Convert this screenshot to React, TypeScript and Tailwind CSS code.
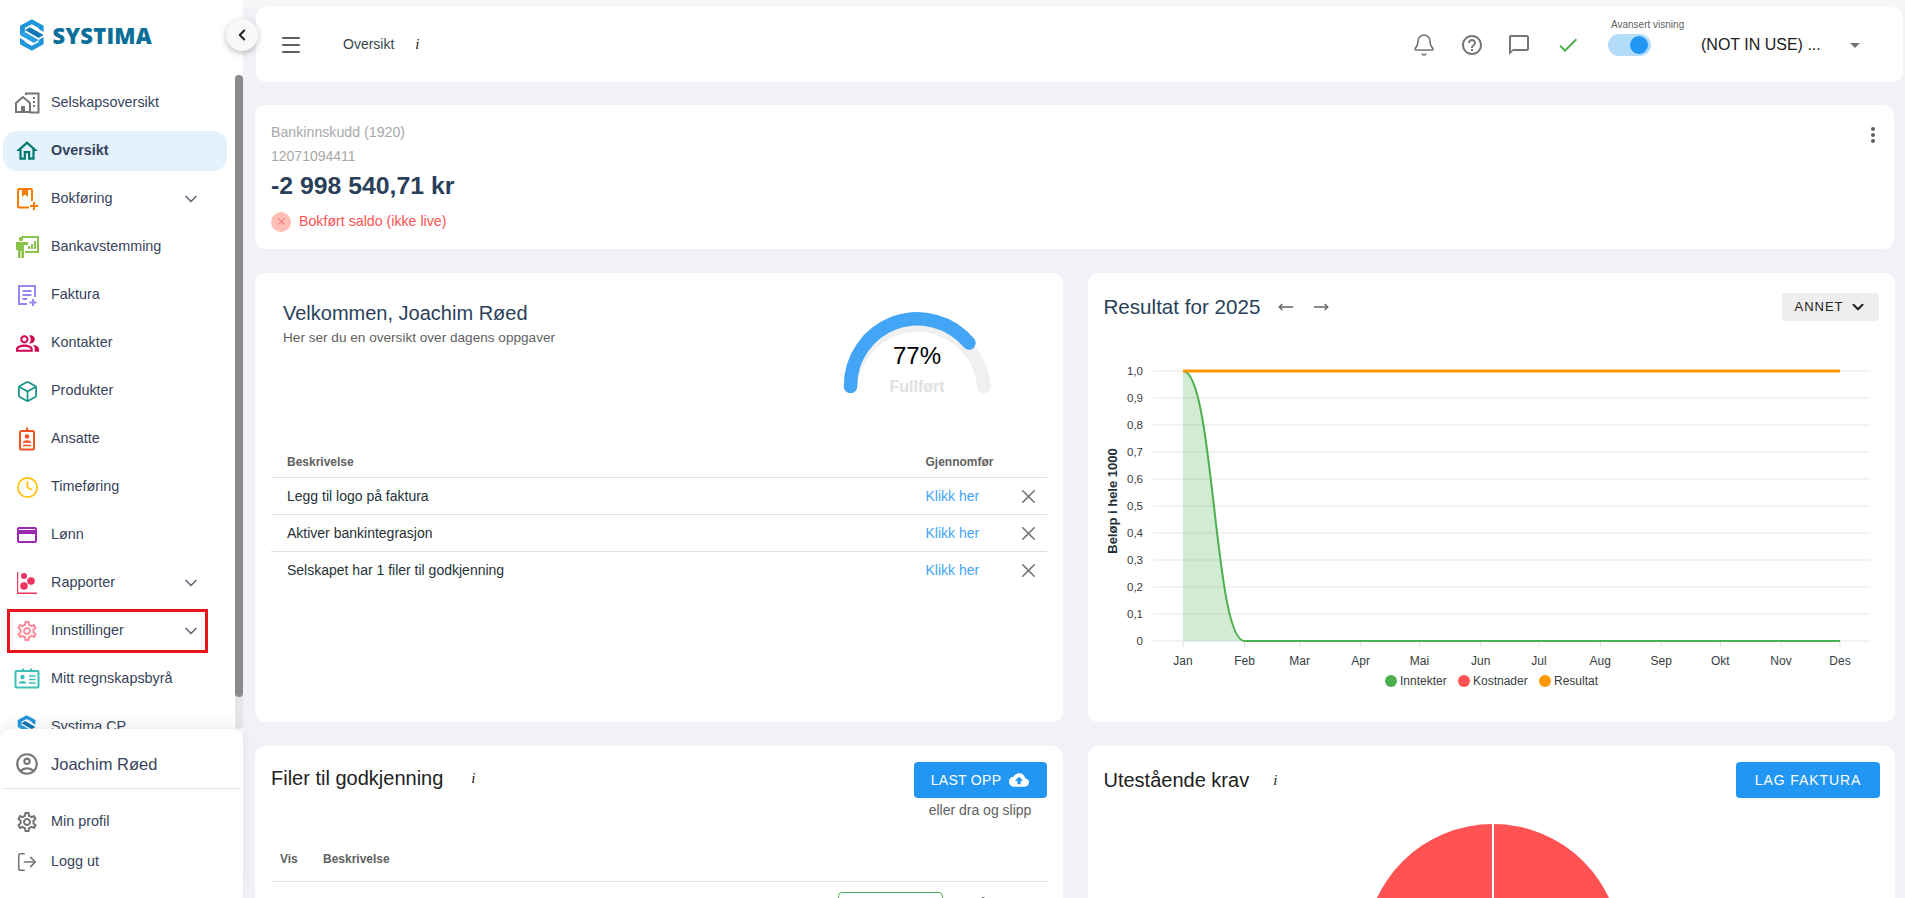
import React from 'react';
import { Bell, Box, ChevronDown, ChevronLeft, Clock, LogOut, Menu, MoveLeft, MoveRight, X } from 'lucide-react';
import {
  MdCheck,
  MdCloudUpload,
  MdMoreVert,
  MdOutlineAccountCircle,
  MdOutlineChatBubbleOutline,
  MdOutlineHelpOutline,
  MdOutlineHome,
  MdOutlinePeopleAlt,
  MdOutlineSettings,
  MdArrowDropDown,
} from 'react-icons/md';

const LogoMark = ({ size = 32 }: { size?: number }) => (
  <svg width={size * 0.8} height={size} viewBox="0 0 26 32">
    <path d="M13 0 L25 6.5 L25 13 L20 10 L20 9 L13 5 L6 9 L6 13 L1 16 L1 6.5 Z" fill="#1f96dc" />
    <path d="M6 11 L20 19 L25 16 L11 8 Z" fill="#1478b4" />
    <path d="M1 16 L15 24 L20 21 L6 13 Z" fill="#2a9fe2" />
    <path d="M1 19 L6 22 L6 23 L13 27 L20 23 L20 21 L25 18 L25 25.5 L13 32 L1 25.5 Z" fill="#1f96dc" />
  </svg>
);

const CompanyIcon = () => (
  <svg width="26" height="22" viewBox="0 0 26 22" fill="none" stroke="#757575" strokeWidth="2">
    <path d="M2 20 V11 L9 5 L16 11 V20 Z" />
    <rect x="7" y="14" width="4" height="6" fill="#757575" stroke="none" />
    <path d="M12 3 V1.5 H24.5 V20.5 H16" />
    <path d="M19 6h2M19 10h2M19 14h2" />
  </svg>
);

const BookIcon = () => (
  <svg width="24" height="24" viewBox="0 0 24 24" fill="none" stroke="#f57c00" strokeWidth="2">
    <path d="M14 20.5 H4 a1 1 0 0 1-1-1 V3 a1 1 0 0 1 1-1 H16 a1 1 0 0 1 1 1 V14" />
    <path d="M7 2 H13 V10 L10 7.5 L7 10 Z" fill="#f57c00" stroke="none" />
    <path d="M19 15 V23 M15 19 H23" />
  </svg>
);

const BankIcon = () => (
  <svg width="24" height="24" viewBox="0 0 24 24">
    <circle cx="6" cy="4" r="2.2" fill="#8bc34a" />
    <path d="M1 7 H13 V10 H9 V23 H6.5 V16 H5.5 V23 H3 V15 H1 Z" fill="#8bc34a" />
    <path d="M7 2 H23 V17 H10" fill="none" stroke="#8bc34a" strokeWidth="2" />
    <path d="M13 14 V11 H15 V14 Z M16 14 V9 H18 V14 Z M19 14 V6 H21 V14 Z" fill="#8bc34a" />
  </svg>
);

const InvoiceIcon = () => (
  <svg width="24" height="24" viewBox="0 0 24 24" fill="none" stroke="#9a86f2" strokeWidth="2">
    <path d="M12 21 H4 V3 H20 V14" />
    <path d="M7.5 8 H16.5 M7.5 12 H16.5 M7.5 16 H12" />
    <path d="M18 16 V23 M14.5 19.5 H21.5" />
  </svg>
);

const BadgeIcon = () => (
  <svg width="24" height="24" viewBox="0 0 24 24" fill="none" stroke="#f4511e" strokeWidth="2">
    <rect x="5" y="4" width="14" height="18.5" rx="1.5" />
    <path d="M12 0.5 V5" />
    <circle cx="12" cy="9.5" r="2.2" fill="#f4511e" stroke="none" />
    <path d="M8 15.5 C8 13 16 13 16 15.5 Z" fill="#f4511e" stroke="#f4511e" strokeWidth="0.6" />
    <path d="M8 18.5 H16" strokeWidth="1.5" />
  </svg>
);

const PayIcon = () => (
  <svg width="24" height="24" viewBox="0 0 24 24" fill="none">
    <rect x="3" y="5" width="18" height="14" rx="1" stroke="#9c27b0" strokeWidth="2" />
    <rect x="3" y="7" width="18" height="4" fill="#9c27b0" />
  </svg>
);

const ReportIcon = () => (
  <svg width="24" height="24" viewBox="0 0 24 24" fill="#f0335f">
    <path d="M2 1 H3.2 V21.5 H22 V23 H2 Z" />
    <circle cx="9" cy="5" r="3" />
    <circle cx="16" cy="10" r="3.8" />
    <circle cx="9" cy="15" r="3.8" />
  </svg>
);

const AgencyIcon = () => (
  <svg width="26" height="24" viewBox="0 0 26 24" fill="none" stroke="#3cc0b4" strokeWidth="2">
    <rect x="1.5" y="4" width="23" height="16.5" rx="1" />
    <path d="M9 1.5 V5 M17 1.5 V5" />
    <circle cx="8.5" cy="10" r="2.2" fill="#3cc0b4" stroke="none" />
    <path d="M4.5 16.5 C4.5 13 12.5 13 12.5 16.5 Z" fill="#3cc0b4" stroke="none" />
    <path d="M15 9 H21.5 M15 12.5 H21.5 M15 16 H21.5" strokeWidth="1.6" />
  </svg>
);

const navItems: { label: string; icon: React.ReactNode; chevron?: boolean; active?: boolean; marked?: boolean }[] = [
  { label: 'Selskapsoversikt', icon: <CompanyIcon /> },
  { label: 'Oversikt', icon: <MdOutlineHome size={26} color="#00796b" />, active: true },
  { label: 'Bokføring', icon: <BookIcon />, chevron: true },
  { label: 'Bankavstemming', icon: <BankIcon /> },
  { label: 'Faktura', icon: <InvoiceIcon /> },
  { label: 'Kontakter', icon: <MdOutlinePeopleAlt size={25} color="#d0044f" /> },
  { label: 'Produkter', icon: <Box size={23} color="#17958a" strokeWidth={1.8} /> },
  { label: 'Ansatte', icon: <BadgeIcon /> },
  { label: 'Timeføring', icon: <Clock size={23} color="#ffc107" strokeWidth={1.8} /> },
  { label: 'Lønn', icon: <PayIcon /> },
  { label: 'Rapporter', icon: <ReportIcon />, chevron: true },
  { label: 'Innstillinger', icon: <MdOutlineSettings size={24} color="#ff8a9a" />, chevron: true, marked: true },
  { label: 'Mitt regnskapsbyrå', icon: <AgencyIcon /> },
  { label: 'Systima CP', icon: <LogoMark size={24} /> },
];

const tasks = ['Legg til logo på faktura', 'Aktiver bankintegrasjon', 'Selskapet har 1 filer til godkjenning'];
const yTicks = ['1,0', '0,9', '0,8', '0,7', '0,6', '0,5', '0,4', '0,3', '0,2', '0,1', '0'];
const months: [string, number][] = [
  ['Jan', 1182], ['Feb', 1243.5], ['Mar', 1298.7], ['Apr', 1359.7], ['Mai', 1418.5], ['Jun', 1479.7],
  ['Jul', 1538], ['Aug', 1599.3], ['Sep', 1660.3], ['Okt', 1719.3], ['Nov', 1780], ['Des', 1839],
];

const Sidebar = () => (
  <aside className="relative z-10 flex h-full w-[243px] shrink-0 flex-col bg-white">
    <div className="flex h-[75px] shrink-0 items-start gap-[8px] pl-[19px] pt-[19px]">
      <LogoMark />
      <span className="mt-[3px] text-[22px] leading-[26px] font-extrabold tracking-[0.2px] text-[#0b6f98] [font-family:'Open_Sans',sans-serif]">SYSTIMA</span>
    </div>
    <button className="absolute left-[226px] top-[19px] z-20 flex h-8 w-8 items-center justify-center rounded-full bg-[#f8f8f8] shadow-[0_2px_6px_rgba(0,0,0,0.25)]">
      <ChevronLeft size={18} strokeWidth={2.5} color="#1f1f1f" />
    </button>
    <div className="flex min-h-0 flex-1 overflow-hidden">
      <nav className="w-[235px] shrink-0 pl-[3px] pr-[8px] pt-[4px]">
        {navItems.map(item => (
          <div key={item.label} className="relative flex h-[48px] items-center">
            <div className={`flex h-[40px] w-full items-center rounded-[14px] ${item.active ? 'bg-[#e3f2fd]' : ''}`}>
              <span className="flex w-[48px] shrink-0 justify-center">{item.icon}</span>
              <span className={`flex-1 text-[14.4px] text-[#36435a] ${item.active ? 'font-semibold' : ''}`}>{item.label}</span>
              {item.chevron && <ChevronDown size={20} color="#5f6b7a" className="mr-[26px]" />}
            </div>
            {item.marked && <div className="absolute left-[4px] top-[2px] h-[44px] w-[201px] border-[3px] border-[#e8141c]" />}
          </div>
        ))}
      </nav>
      <div className="w-[8px] shrink-0 rounded-full bg-[#e6e6e6]">
        <div className="h-[622px] rounded-full bg-[#8a8a8a]" />
      </div>
    </div>
    <div className="z-10 h-[169px] shrink-0 rounded-t-[12px] bg-white shadow-[0_-6px_12px_rgba(0,0,0,0.06)]">
      <div className="mx-[3px] flex h-[60px] items-center border-b border-[#e0e0e0] pt-[11px]">
        <span className="flex w-[48px] justify-center"><MdOutlineAccountCircle size={26} color="#757575" /></span>
        <span className="text-[16.5px] text-[#36435a]">Joachim Røed</span>
      </div>
      <div className="mx-[3px] mt-[13px] flex h-[40px] items-center">
        <span className="flex w-[48px] justify-center"><MdOutlineSettings size={24} color="#757575" /></span>
        <span className="text-[14.4px] text-[#36435a]">Min profil</span>
      </div>
      <div className="mx-[3px] flex h-[40px] items-center">
        <span className="flex w-[48px] justify-center"><LogOut size={22} color="#757575" strokeWidth={1.7} /></span>
        <span className="text-[14.4px] text-[#36435a]">Logg ut</span>
      </div>
    </div>
  </aside>
);

const TopBar = () => (
  <header className="ml-[13px] mr-[2px] flex h-[75px] items-center rounded-[10px] bg-white">
    <Menu size={24} color="#616161" strokeWidth={2} className="ml-[23px]" />
    <span className="ml-[40px] text-[14px] text-[#37474f]">Oversikt</span>
    <i className="ml-[21px] text-[15px] [font-family:'Liberation_Serif',serif]">i</i>
    <div className="ml-auto flex items-center">
      <Bell size={24} color="#757575" strokeWidth={1.6} />
      <MdOutlineHelpOutline size={24} color="#757575" className="ml-[24px]" />
      <MdOutlineChatBubbleOutline size={24} color="#757575" className="ml-[23px]" />
      <MdCheck size={24} color="#4caf50" className="ml-[25px]" />
      <div className="relative ml-[28px] mt-[1px]">
        <span className="absolute left-[3px] top-[-15px] whitespace-nowrap text-[10px] leading-[12px] text-[#616161]">Avansert visning</span>
        <div className="flex h-[22px] w-[43px] items-center justify-end rounded-full bg-[#b3dcfb] pr-[3px]">
          <div className="h-[18px] w-[18px] rounded-full bg-[#2196f3]" />
        </div>
      </div>
      <span className="ml-[50px] w-[142px] text-[16px] text-[#212121]">(NOT IN USE) ...</span>
      <MdArrowDropDown size={24} color="#757575" className="mr-[36px]" />
    </div>
  </header>
);

const BankCard = () => (
  <section className="relative ml-[12px] mr-[11px] mt-[23px] h-[144px] rounded-[10px] bg-white pl-[16px] pt-[16px]">
    <p className="text-[14.2px] leading-[22px] text-[#a8a8a8]">Bankinnskudd (1920)</p>
    <p className="mt-[2px] text-[14px] leading-[22px] text-[#a8a8a8]">12071094411</p>
    <p className="mt-[3px] text-[24.8px] leading-[32px] font-bold text-[#2a3f5a]">-2 998 540,71 kr</p>
    <div className="mt-[9px] flex items-center gap-[8px]">
      <span className="flex h-[20px] w-[20px] items-center justify-center rounded-full bg-[#ffbdb5]">
        <X size={11} color="#ff5252" />
      </span>
      <span className="text-[14.2px] text-[#ff5252]">Bokført saldo (ikke live)</span>
    </div>
    <button className="absolute right-[9px] top-[18px]"><MdMoreVert size={24} color="#616161" /></button>
  </section>
);

const WelcomeCard = () => (
  <section className="h-[449px] rounded-[10px] bg-white px-[16px]">
    <div className="relative h-[180px] pl-[12px] pt-[26px]">
      <h2 className="text-[20px] leading-[28px] text-[#2a3f5a]">Velkommen, Joachim Røed</h2>
      <p className="mt-[1px] text-[13.6px] leading-[20px] text-[#616161]">Her ser du en oversikt over dagens oppgaver</p>
      <svg width="150" height="100" viewBox="842 306 150 100" className="absolute left-[571px] top-[33px]">
        <path d="M850.5 386.5 A67 67 0 0 1 984 386.5" fill="none" stroke="#f0f0f0" strokeWidth="13.5" strokeLinecap="round" />
        <path d="M850.5 386.5 A67 67 0 0 1 969 343" fill="none" stroke="#42a5f5" strokeWidth="13.5" strokeLinecap="round" />
        <text x="917" y="364" textAnchor="middle" fontSize="24" fill="#000" fontFamily="'Liberation Sans', sans-serif">77%</text>
        <text x="917" y="392" textAnchor="middle" fontSize="16" fontWeight="700" fill="#e0e0e0" fontFamily="'Liberation Sans', sans-serif">Fullført</text>
      </svg>
    </div>
    <div className="flex h-[24px] items-start text-[12px] font-semibold text-[#616161]">
      <span className="ml-[16px] flex-1">Beskrivelse</span>
      <span className="w-[121px]">Gjennomfør</span>
    </div>
    {tasks.map(task => (
      <div key={task} className="flex h-[37px] items-center border-t border-[#e0e0e0] text-[14px]">
        <span className="ml-[16px] flex-1 text-[#263238]">{task}</span>
        <span className="w-[91px] text-[#42a5f5]">Klikk her</span>
        <X size={23} color="#757575" strokeWidth={1.7} className="mr-[7px]" />
      </div>
    ))}
  </section>
);

const ResultChart = () => (
  <section className="h-[449px] rounded-[10px] bg-white pt-[20px]">
    <div className="flex h-[28px] items-center pl-[16px] pr-[17px]">
      <h2 className="text-[20.6px] text-[#2a3f5a]">Resultat for 2025</h2>
      <MoveLeft size={16} color="#616161" className="ml-[18px]" />
      <MoveRight size={16} color="#616161" className="ml-[19px]" />
      <button className="ml-auto mr-[-1px] flex h-[28px] w-[97px] items-center justify-center gap-[5px] rounded-[4px] bg-[#eeeeee] text-[13px] font-medium tracking-[1px] text-[#212121]">
        ANNET <ChevronDown size={18} strokeWidth={2.8} />
      </button>
    </div>
    <svg width="808" height="350" viewBox="1087 345 808 350" className="mt-[24px] block" fontFamily="'Liberation Sans', sans-serif">
      {yTicks.map((t, i) => {
        const y = 371 + i * 27;
        return (
          <g key={t}>
            <line x1="1152" x2="1869" y1={y} y2={y} stroke="#eeeeee" strokeWidth="1.5" />
            <text x="1142" y={y + 4} textAnchor="end" fontSize="11.5" fill="#373d3f">{t}</text>
          </g>
        );
      })}
      <text transform="translate(1116 501) rotate(-90)" textAnchor="middle" fontSize="13" fontWeight="700" fill="#263238">Beløp i hele 1000</text>
      {months.map(([m, x]) => (
        <g key={m}>
          <line x1={x} x2={x} y1="641" y2="647" stroke="#e0e0e0" />
          <text x={x} y="665" textAnchor="middle" fontSize="12" fill="#373d3f">{m}</text>
        </g>
      ))}
      <path d="M1182 371 C1213 371 1213 641 1243.5 641 L1182 641 Z" fill="#4caf50" fillOpacity="0.25" />
      <path d="M1182 371 C1213 371 1213 641 1243.5 641 L1839 641" fill="none" stroke="#4caf50" strokeWidth="2" />
      <line x1="1182" x2="1839" y1="371" y2="371" stroke="#ff9800" strokeWidth="3" />
      <circle cx="1390" cy="681" r="6" fill="#4caf50" />
      <text x="1399" y="685" fontSize="12" fill="#373d3f">Inntekter</text>
      <circle cx="1463" cy="681" r="6" fill="#ff5252" />
      <text x="1472" y="685" fontSize="12" fill="#373d3f">Kostnader</text>
      <circle cx="1544" cy="681" r="6" fill="#ff9800" />
      <text x="1553" y="685" fontSize="12" fill="#373d3f">Resultat</text>
    </svg>
  </section>
);

const FilesCard = () => (
  <section className="h-[300px] rounded-[10px] bg-white px-[16px] pt-[16px]">
    <div className="flex items-start">
      <h2 className="mt-[2px] text-[20px] leading-[28px] text-[#212121]">Filer til godkjenning</h2>
      <i className="ml-[28px] mt-[5px] text-[15px] [font-family:'Liberation_Serif',serif]">i</i>
      <div className="ml-auto flex flex-col items-center">
        <button className="flex h-[36px] w-[133px] items-center justify-center gap-[8px] rounded-[4px] bg-[#2196f3] text-[14px] font-medium tracking-[0.3px] text-white">
          LAST OPP <MdCloudUpload size={20} color="#fff" />
        </button>
        <span className="mt-[2px] text-[14px] leading-[20px] text-[#616161]">eller dra og slipp</span>
      </div>
    </div>
    <div className="mt-[20px] flex h-[42px] items-center border-b border-[#e0e0e0] pb-[4px] text-[12px] font-semibold text-[#616161]">
      <span className="ml-[9px] w-[43px]">Vis</span>
      <span>Beskrivelse</span>
    </div>
    <div className="mt-[10px] flex items-start">
      <div className="ml-auto h-[36px] w-[105px] rounded-[4px] border border-[#4caf50]" />
      <MdMoreVert size={24} color="#616161" className="ml-[28px] mr-[52px] mt-[1px]" />
    </div>
  </section>
);

const ClaimsCard = () => (
  <section className="h-[300px] rounded-[10px] bg-white pt-[16px]">
    <div className="flex items-start pl-[16px] pr-[17px]">
      <h2 className="mt-[4px] text-[20px] leading-[28px] text-[#212121]">Utestående krav</h2>
      <i className="ml-[24px] mt-[7px] text-[15px] [font-family:'Liberation_Serif',serif]">i</i>
      <button className="ml-auto mr-[-2px] flex h-[36px] w-[144px] items-center justify-center rounded-[4px] bg-[#2196f3] text-[14px] font-medium tracking-[0.9px] text-white">LAG FAKTURA</button>
    </div>
    <svg width="808" height="256" viewBox="0 0 808 256" className="mt-[26px] block">
      <circle cx="405" cy="128" r="128" fill="#ff5252" />
      <line x1="405" x2="405" y1="0" y2="256" stroke="#fff" strokeWidth="2" />
    </svg>
  </section>
);

export default function App() {
  return (
    <div className="flex h-screen overflow-hidden bg-[#f0f2f7] text-[#212121] [font-family:'Liberation_Sans',sans-serif]">
      <Sidebar />
      <main className="min-w-0 flex-1">
        <div className="h-[7px] bg-[#f7f7f7]" />
        <TopBar />
        <BankCard />
        <div className="ml-[12px] mr-[10px] mt-[24px] grid grid-cols-2 gap-x-[25px] gap-y-[24px]">
          <WelcomeCard />
          <ResultChart />
          <FilesCard />
          <ClaimsCard />
        </div>
      </main>
    </div>
  );
}
